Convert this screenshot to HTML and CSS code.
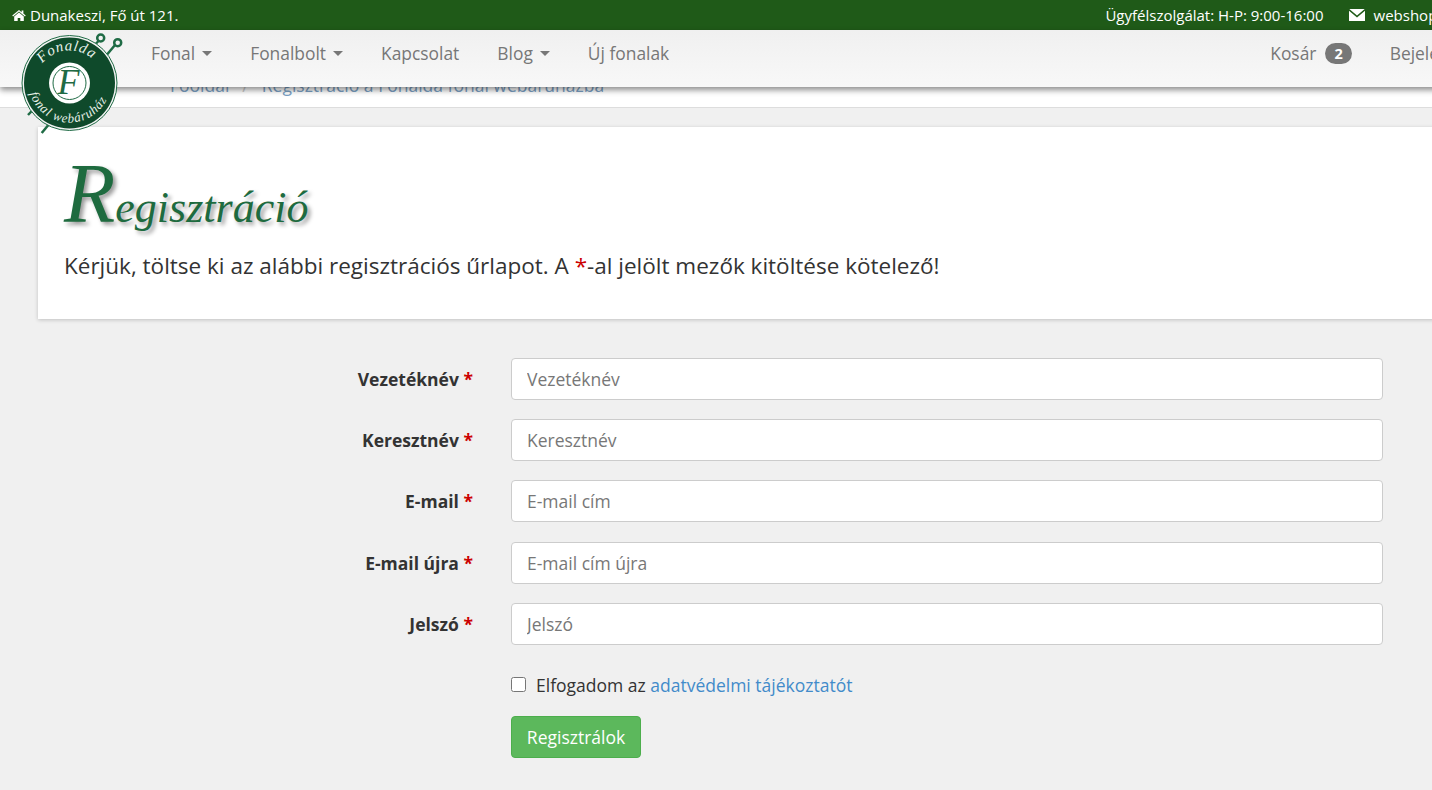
FILE: index.html
```html
<!DOCTYPE html>
<html lang="hu">

<head>
    <meta charset="UTF-8">
    <meta name="viewport" content="width=device-width, initial-scale=1.0">
    <link rel="stylesheet" href="styles.css">
    <title>Regisztráció</title>
</head>

<body>

    <header class="site-header">
        <div class="top-bar">
            <div class="top-address">
                <svg class="icon-home" viewBox="0 0 16 14"><path d="M8 0.6 0.3 7.1l0.9 1L8 2.5l6.8 5.6 0.9-1L13 4.8V1.2h-2v2L8 0.6zM8 3.7 2.5 8.2v5.2h4V9.9h3v3.5h4V8.2L8 3.7z"/></svg>
                <span>Dunakeszi, Fő út 121.</span>
            </div>
            <div class="top-contact">
                <span>Ügyfélszolgálat: H-P: 9:00-16:00</span>
                <svg class="icon-mail" viewBox="0 0 16 12"><path d="M0.3 0h15.4L8 6.4 0.3 0zM0 1.8V12h16V1.8L8 8.4 0 1.8z"/></svg>
                <span>webshop@fonalda.hu</span>
            </div>
        </div>
        <nav class="main-nav">
            <ul class="nav-list">
                <li><a href="#">Fonal<i class="caret"></i></a></li>
                <li><a href="#">Fonalbolt<i class="caret"></i></a></li>
                <li><a href="#">Kapcsolat</a></li>
                <li><a href="#">Blog<i class="caret"></i></a></li>
                <li><a href="#">Új fonalak</a></li>
            </ul>
            <ul class="nav-list nav-right">
                <li><a href="#">Kosár<span class="badge">2</span></a></li>
                <li><a href="#">Bejelentkezés</a></li>
            </ul>
        </nav>
        <svg class="logo" viewBox="0 0 120 112">
            <g stroke="#1f6b45" fill="none">
                <path d="M105 17 31.700 105" stroke-width="2.500"/>
                <path d="M88.500 13 18 87" stroke-width="2.500"/>
                <circle cx="107.700" cy="14.700" r="3.500" stroke-width="2.500"/>
                <circle cx="90.700" cy="10" r="3.500" stroke-width="2.500"/>
            </g>
            <circle cx="59.500" cy="55" r="47.500" fill="#f4f4f4" stroke="#1f6b45"/>
            <circle cx="59.500" cy="55" r="45.500" fill="#0f4a2b"/>
            <circle cx="59.500" cy="55" r="20.500" fill="#fff"/>
            <circle cx="59.500" cy="55" r="16.500" fill="#fff" stroke="#1f6b45"/>
            <text class="logo-f" x="58.500" y="66">F</text>
            <path id="arc-top" d="M25 60a34.500 34.500 0 0 1 69 -6" fill="none"/>
            <path id="arc-bottom" d="M18 50a41.500 41.500 0 0 0 83 6" fill="none"/>
            <text class="logo-text"><textPath href="#arc-top" startOffset="50%">Fonalda</textPath></text>
            <text class="logo-text logo-small"><textPath href="#arc-bottom" startOffset="50%">fonal webáruház</textPath></text>
        </svg>
    </header>

    <main class="page">
        <div class="breadcrumb">
            <a href="#">Főoldal</a><span class="crumb-sep">/</span><a href="#">Regisztráció a Fonalda fonal webáruházba</a>
        </div>

        <section class="intro">
            <h1 class="intro-title"><span class="title-cap">R</span>egisztráció</h1>
            <p class="intro-text">Kérjük, töltse ki az alábbi regisztrációs űrlapot. A <span class="req">*</span>-al jelölt mezők kitöltése kötelező!</p>
        </section>

        <form class="reg-form">
            <div class="form-row">
                <label class="form-label" for="lastname">Vezetéknév <span class="req">*</span></label>
                <input class="form-input" id="lastname" type="text" placeholder="Vezetéknév">
            </div>
            <div class="form-row">
                <label class="form-label" for="firstname">Keresztnév <span class="req">*</span></label>
                <input class="form-input" id="firstname" type="text" placeholder="Keresztnév">
            </div>
            <div class="form-row">
                <label class="form-label" for="email">E-mail <span class="req">*</span></label>
                <input class="form-input" id="email" type="text" placeholder="E-mail cím">
            </div>
            <div class="form-row">
                <label class="form-label" for="email2">E-mail újra <span class="req">*</span></label>
                <input class="form-input" id="email2" type="text" placeholder="E-mail cím újra">
            </div>
            <div class="form-row">
                <label class="form-label" for="password">Jelszó <span class="req">*</span></label>
                <input class="form-input" id="password" type="text" placeholder="Jelszó">
            </div>
            <div class="form-actions">
                <label class="accept">
                    <input class="accept-box" type="checkbox">
                    <span>Elfogadom az <a href="#">adatvédelmi tájékoztatót</a></span>
                </label>
                <button class="submit-btn" type="button">Regisztrálok</button>
            </div>
        </form>
    </main>

</body>

</html>
```

FILE: styles.css
```css
html,
body {
    margin: 0;
    height: 100%;
    overflow: hidden;
}

body {
    background-color: #f0f0f0;
    color: #333;
    font-family: 'Open Sans', sans-serif;
    font-size: 17.5px;
}

a {
    color: #428bca;
    text-decoration: none;
}

.site-header {
    position: absolute;
    top: 0;
    left: 0;
    z-index: 10;
    width: 1526px;
}

.top-bar {
    display: flex;
    justify-content: space-between;
    align-items: center;
    height: 30px;
    padding-left: 12px;
    background-color: #1f5a18;
    color: #fff;
    font-size: 15px;
}

.top-address {
    display: flex;
    align-items: center;
    gap: 4px;
}

.top-contact {
    display: flex;
    align-items: center;
}

.icon-home {
    width: 14px;
    height: 13px;
    fill: #fff;
}

.icon-mail {
    width: 16px;
    height: 12px;
    margin: 0 9px 0 25px;
    fill: #fff;
}

.main-nav {
    display: flex;
    justify-content: space-between;
    height: 57px;
    background: linear-gradient(to bottom, #f0f0f0, #f8f8f8);
    box-shadow: 0 3px 6px rgba(0, 0, 0, 0.45);
}

.nav-list {
    display: flex;
    gap: 38px;
    margin: 0;
    padding: 0 0 0 151px;
    list-style: none;
    font-size: 17.4px;
}

.nav-right {
    padding: 0 25px 0 0;
}

.nav-list a {
    display: flex;
    align-items: center;
    height: 46px;
    color: #777;
}

.caret {
    display: inline-block;
    margin-left: 7px;
    border-top: 5px solid #777;
    border-left: 5px solid transparent;
    border-right: 5px solid transparent;
}

.badge {
    margin-left: 9px;
    padding: 0 9px;
    border-radius: 11px;
    background-color: #777;
    color: #fff;
    font-size: 14.5px;
    font-weight: 700;
    line-height: 21px;
}

.logo {
    position: absolute;
    top: 28px;
    left: 10px;
    width: 120px;
    height: 112px;
}

.logo-f {
    fill: #1f6b45;
    font-family: 'Liberation Serif', serif;
    font-size: 36px;
    font-style: italic;
    text-anchor: middle;
}

.logo-text {
    fill: #e8f2ea;
    font-family: 'Liberation Serif', serif;
    font-size: 15px;
    font-style: italic;
    text-anchor: middle;
    letter-spacing: 0.8px;
}

.logo-small {
    font-size: 13px;
}

.breadcrumb {
    height: 108px;
    box-sizing: border-box;
    padding: 74px 0 0 170px;
    border-bottom: 1px solid #ddd;
    background-color: #fff;
    font-size: 17.5px;
    line-height: 22px;
}

.breadcrumb a {
    color: #7a9fc4;
}

.crumb-sep {
    margin: 0 13px;
    color: #ccc;
}

.intro {
    width: 1500px;
    height: 192px;
    box-sizing: border-box;
    margin: 19px 0 0 38px;
    padding: 30px 0 0 26px;
    background-color: #fff;
    box-shadow: 0 1px 4px rgba(0, 0, 0, 0.2);
}

.intro-title {
    margin: 0;
    color: #1e6b3f;
    font-family: 'Liberation Serif', serif;
    font-size: 44px;
    font-style: italic;
    font-weight: 400;
    line-height: 74px;
    text-shadow: 3px 3px 4px rgba(0, 0, 0, 0.4);
}

.title-cap {
    font-size: 84px;
}

.intro-text {
    margin: 6px 0 0;
    font-size: 22.5px;
    line-height: 30px;
}

.req {
    color: #c00;
}

.reg-form {
    margin-top: 39px;
}

.form-row {
    display: flex;
    align-items: center;
    margin-bottom: 19.2px;
}

.form-label {
    width: 473px;
    font-weight: 700;
    text-align: right;
}

.form-input {
    width: 872px;
    height: 42px;
    box-sizing: border-box;
    margin-left: 38px;
    padding: 0 15px;
    border: 1px solid #ccc;
    border-radius: 4px;
    background-color: #fff;
    color: #555;
    font-family: 'Open Sans', sans-serif;
    font-size: 17.5px;
}

.form-input::placeholder {
    color: #777;
}

.form-actions {
    margin-left: 511px;
    padding-top: 6px;
}

.accept {
    display: flex;
    align-items: center;
    gap: 10px;
    height: 30px;
}

.accept-box {
    width: 15px;
    height: 15px;
    margin: 0;
}

.submit-btn {
    display: block;
    width: 130px;
    height: 42px;
    margin-top: 16px;
    border: 1px solid #4cae4c;
    border-radius: 4px;
    background-color: #5cb85c;
    color: #fff;
    font-family: 'Open Sans', sans-serif;
    font-size: 17.5px;
}
```
